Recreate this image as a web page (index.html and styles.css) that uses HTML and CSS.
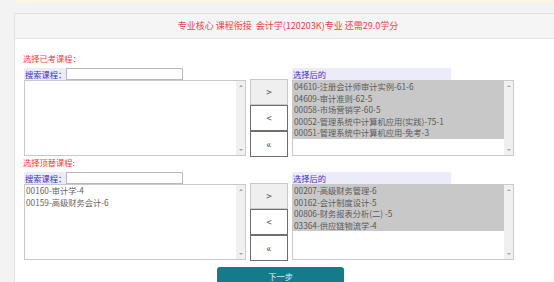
FILE: index.html
```html
<!DOCTYPE html>
<html lang="zh-CN">
	<head>
		<meta charset="UTF-8">
		<title>课程衔接</title>
		<link rel="stylesheet" href="styles.css">
	</head>
	<body>
		<div class="notice"></div>
		<div class="panel">
			<div class="panel-head">专业核心 课程衔接&nbsp;&nbsp;会计学(120203K)专业 还需29.0学分</div>
			<div class="panel-body">
				<div class="section">
					<div class="hint">选择已考课程：</div>
					<div class="picker">
						<div class="col">
							<label class="search"><span class="tag">搜索课程：</span><input type="text"></label>
							<div class="listbox">
								<div class="options"></div>
								<div class="scrollbar"><i class="up"></i><i class="down"></i></div>
							</div>
						</div>
						<div class="moves">
							<button class="move is-light">&gt;</button>
							<button class="move">&lt;</button>
							<button class="move">&laquo;</button>
						</div>
						<div class="col">
							<div class="search"><span class="tag tag-wide">选择后的</span></div>
							<div class="listbox">
								<div class="options">
									<div class="option is-selected">04610-注册会计师审计实例-61-6</div>
									<div class="option is-selected">04609-审计准则-62-5</div>
									<div class="option is-selected">00058-市场营销学-60-5</div>
									<div class="option is-selected">00052-管理系统中计算机应用(实践)-75-1</div>
									<div class="option is-selected">00051-管理系统中计算机应用-免考-3</div>
								</div>
								<div class="scrollbar"><i class="up"></i><i class="down"></i></div>
							</div>
						</div>
					</div>
				</div>

				<div class="section">
					<div class="hint">选择顶替课程:</div>
					<div class="picker">
						<div class="col">
							<label class="search"><span class="tag">搜索课程：</span><input type="text"></label>
							<div class="listbox">
								<div class="options">
									<div class="option">00160-审计学-4</div>
									<div class="option">00159-高级财务会计-6</div>
								</div>
								<div class="scrollbar"><i class="up"></i><i class="down"></i></div>
							</div>
						</div>
						<div class="moves">
							<button class="move is-light">&gt;</button>
							<button class="move">&lt;</button>
							<button class="move">&laquo;</button>
						</div>
						<div class="col">
							<div class="search"><span class="tag tag-wide">选择后的</span></div>
							<div class="listbox">
								<div class="options">
									<div class="option is-selected">00207-高级财务管理-6</div>
									<div class="option is-selected">00162-会计制度设计-5</div>
									<div class="option is-selected">00806-财务报表分析(二) -5</div>
									<div class="option is-selected">03364-供应链物流学-4</div>
								</div>
								<div class="scrollbar"><i class="up"></i><i class="down"></i></div>
							</div>
						</div>
					</div>
				</div>

				<div class="actions">
					<button class="next">下一步</button>
				</div>
			</div>
		</div>
	</body>
</html>
```

FILE: styles.css
```css
* {
	box-sizing:  border-box;
	font-family: "Noto Sans CJK SC", "Noto Sans", sans-serif;
}

body {
	margin:     0;
	background: #f3f3f3;
	overflow:   hidden;
	height:     282px;
}

.notice {
	margin-left: 14px;
	height:      2px;
	background:  #fdf4e3;
}

.panel {
	margin:     11px 0 0 14px;
	width:      548px;
	height:     280px;
	background: #fff;
	border:     1px solid #e2e2e2;
}

.panel-head {
	height:        25px;
	line-height:   24px;
	text-align:    center;
	font-size:     9px;
	color:         #ee4444;
	background:    #f5f5f5;
	border-bottom: 1px solid #e4e4e4;
	white-space:   pre;
}

.panel-body {
	padding: 13px 0 0 8px;
}

.hint {
	height:        12px;
	line-height:   12px;
	font-size:     8.25px;
	color:         #f43b3b;
	margin-bottom: 4px;
}

.picker {
	display:      flex;
	align-items:  flex-end;
	gap:          4px;
	padding-left: 1px;
}

.col {
	width: 222px;
}

.search {
	display: flex;
	height:  12px;
}

.tag {
	width:       42px;
	height:      12px;
	line-height: 12px;
	padding:     0 1px;
	font-size:   8.25px;
	color:       #3434b8;
	background:  #ebebfa;
	white-space: nowrap;
}

.tag-wide {
	width: 159px;
}

.search input {
	width:     117px;
	height:    12px;
	margin:    0;
	padding:   0 2px;
	border:    1px solid #b9b9b9;
	outline:   none;
	font-size: 8px;
}

.listbox {
	display: flex;
	height:  76px;
	border:  1px solid #c9c9c9;
}

.options {
	flex: 1;
}

.option {
	height:      11.6px;
	line-height: 11.6px;
	padding:     0 1px;
	font-size:   8.25px;
	color:       #666;
	white-space: nowrap;
	overflow:    hidden;
}

.option.is-selected {
	background: #c8c8c8;
	color:      #5a5a5a;
}

.scrollbar {
	width:           9px;
	background:      #f0f0f0;
	display:         flex;
	flex-direction:  column;
	justify-content: space-between;
	align-items:     center;
	padding:         4px 0;
}

.scrollbar i {
	display:      block;
	width:        0;
	height:       0;
	border-left:  2px solid transparent;
	border-right: 2px solid transparent;
}

.scrollbar .up {
	border-bottom: 2px solid #a6a6a6;
}

.scrollbar .down {
	border-top: 2px solid #a6a6a6;
}

.moves {
	display:        flex;
	flex-direction: column;
	width:          38px;
	margin-bottom:  -1px;
}

.move {
	height:      26px;
	margin:      0;
	padding:     0;
	border:      1px solid #6e6e6e;
	background:  #fff;
	color:       #4a4a4a;
	font-size:   10px;
	line-height: 1;
}

.move.is-light {
	background:   #efefef;
	border-color: #c8c8c8;
}

.actions {
	padding: 1px 0 0 194px;
}

.next {
	width:         127px;
	height:        19px;
	margin:        0;
	padding:       0;
	border:        0;
	border-radius: 3px;
	background:    #157a8a;
	color:         #e8f4f6;
	font-size:     8.25px;
}
```
